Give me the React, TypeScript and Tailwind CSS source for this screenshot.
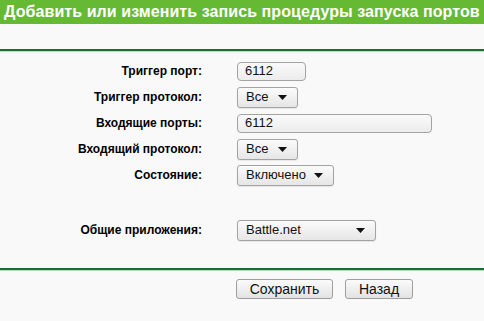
type Row = {
  label: string;
  kind: "input" | "select";
  value: string;
  width: string;
};

const rows: Row[] = [
  { label: "Триггер порт:", kind: "input", value: "6112", width: "w-[69px]" },
  { label: "Триггер протокол:", kind: "select", value: "Все", width: "w-[61px]" },
  { label: "Входящие порты:", kind: "input", value: "6112", width: "w-[195px]" },
  { label: "Входящий протокол:", kind: "select", value: "Все", width: "w-[61px]" },
  { label: "Состояние:", kind: "select", value: "Включено", width: "w-[97px]" },
];

function Arrow() {
  return (
    <svg width="9" height="5" viewBox="0 0 9 5" className="shrink-0">
      <path d="M0 0 H9 L4.5 5 Z" fill="#111" />
    </svg>
  );
}

function Control({ kind, value, width }: Omit<Row, "label">) {
  if (kind === "input") {
    return (
      <div
        className={`${width} h-[19px] flex items-center px-[7px] rounded-[4px] border border-[#a3a3a3] bg-gradient-to-b from-[#fafafa] to-[#ececec] text-[13px] text-[#111]`}
      >
        {value}
      </div>
    );
  }
  return (
    <div
      className={`${width} h-[21px] flex items-center justify-between pl-[8px] pr-[10px] rounded-[3px] border border-[#a3a3a3] bg-gradient-to-b from-[#fbfbfb] to-[#e6e6e6] text-[13px] text-[#111] shadow-[0_1px_1px_rgba(0,0,0,0.08)]`}
    >
      <span>{value}</span>
      <Arrow />
    </div>
  );
}

function FormRow({ label, ...rest }: Row) {
  return (
    <div className="h-[26px] flex items-center">
      <div className="w-[202px] text-right text-[12px] font-bold text-black">{label}</div>
      <div className="ml-[35px]">
        <Control {...rest} />
      </div>
    </div>
  );
}

function Divider() {
  return (
    <div>
      <div className="h-[2px] bg-[#1e6b36]" />
      <div className="h-[1px] bg-[#b9dfba]" />
    </div>
  );
}

export default function App() {
  return (
    <div
      className="w-[484px] h-[321px] bg-[#f9f9f9] overflow-hidden"
      style={{ fontFamily: '"Liberation Sans", Arial, sans-serif' }}
    >
      <div className="h-[24px] bg-[#66b932] flex items-center pl-[4px]">
        <h1 className="text-[16px] tracking-[0.08px] font-bold text-white whitespace-nowrap leading-none">
          Добавить или изменить запись процедуры запуска портов
        </h1>
      </div>

      <div className="h-[25px]" />
      <Divider />

      <div className="pt-[6px]">
        {rows.map((r) => (
          <FormRow key={r.label} {...r} />
        ))}
        <div className="h-[29px]" />
        <FormRow label="Общие приложения:" kind="select" value="Battle.net" width="w-[139px]" />
      </div>

      <div className="h-[25px]" />
      <Divider />

      <div className="flex gap-[12px] pl-[236px] pt-[8px]">
        <button className="w-[97px] h-[20px] rounded-[3px] border border-[#9e9e9e] bg-gradient-to-b from-[#fbfbfb] to-[#e3e3e3] text-[14px] text-[#111] leading-none">
          Сохранить
        </button>
        <button className="w-[68px] h-[20px] rounded-[3px] border border-[#9e9e9e] bg-gradient-to-b from-[#fbfbfb] to-[#e3e3e3] text-[14px] text-[#111] leading-none">
          Назад
        </button>
      </div>
    </div>
  );
}
